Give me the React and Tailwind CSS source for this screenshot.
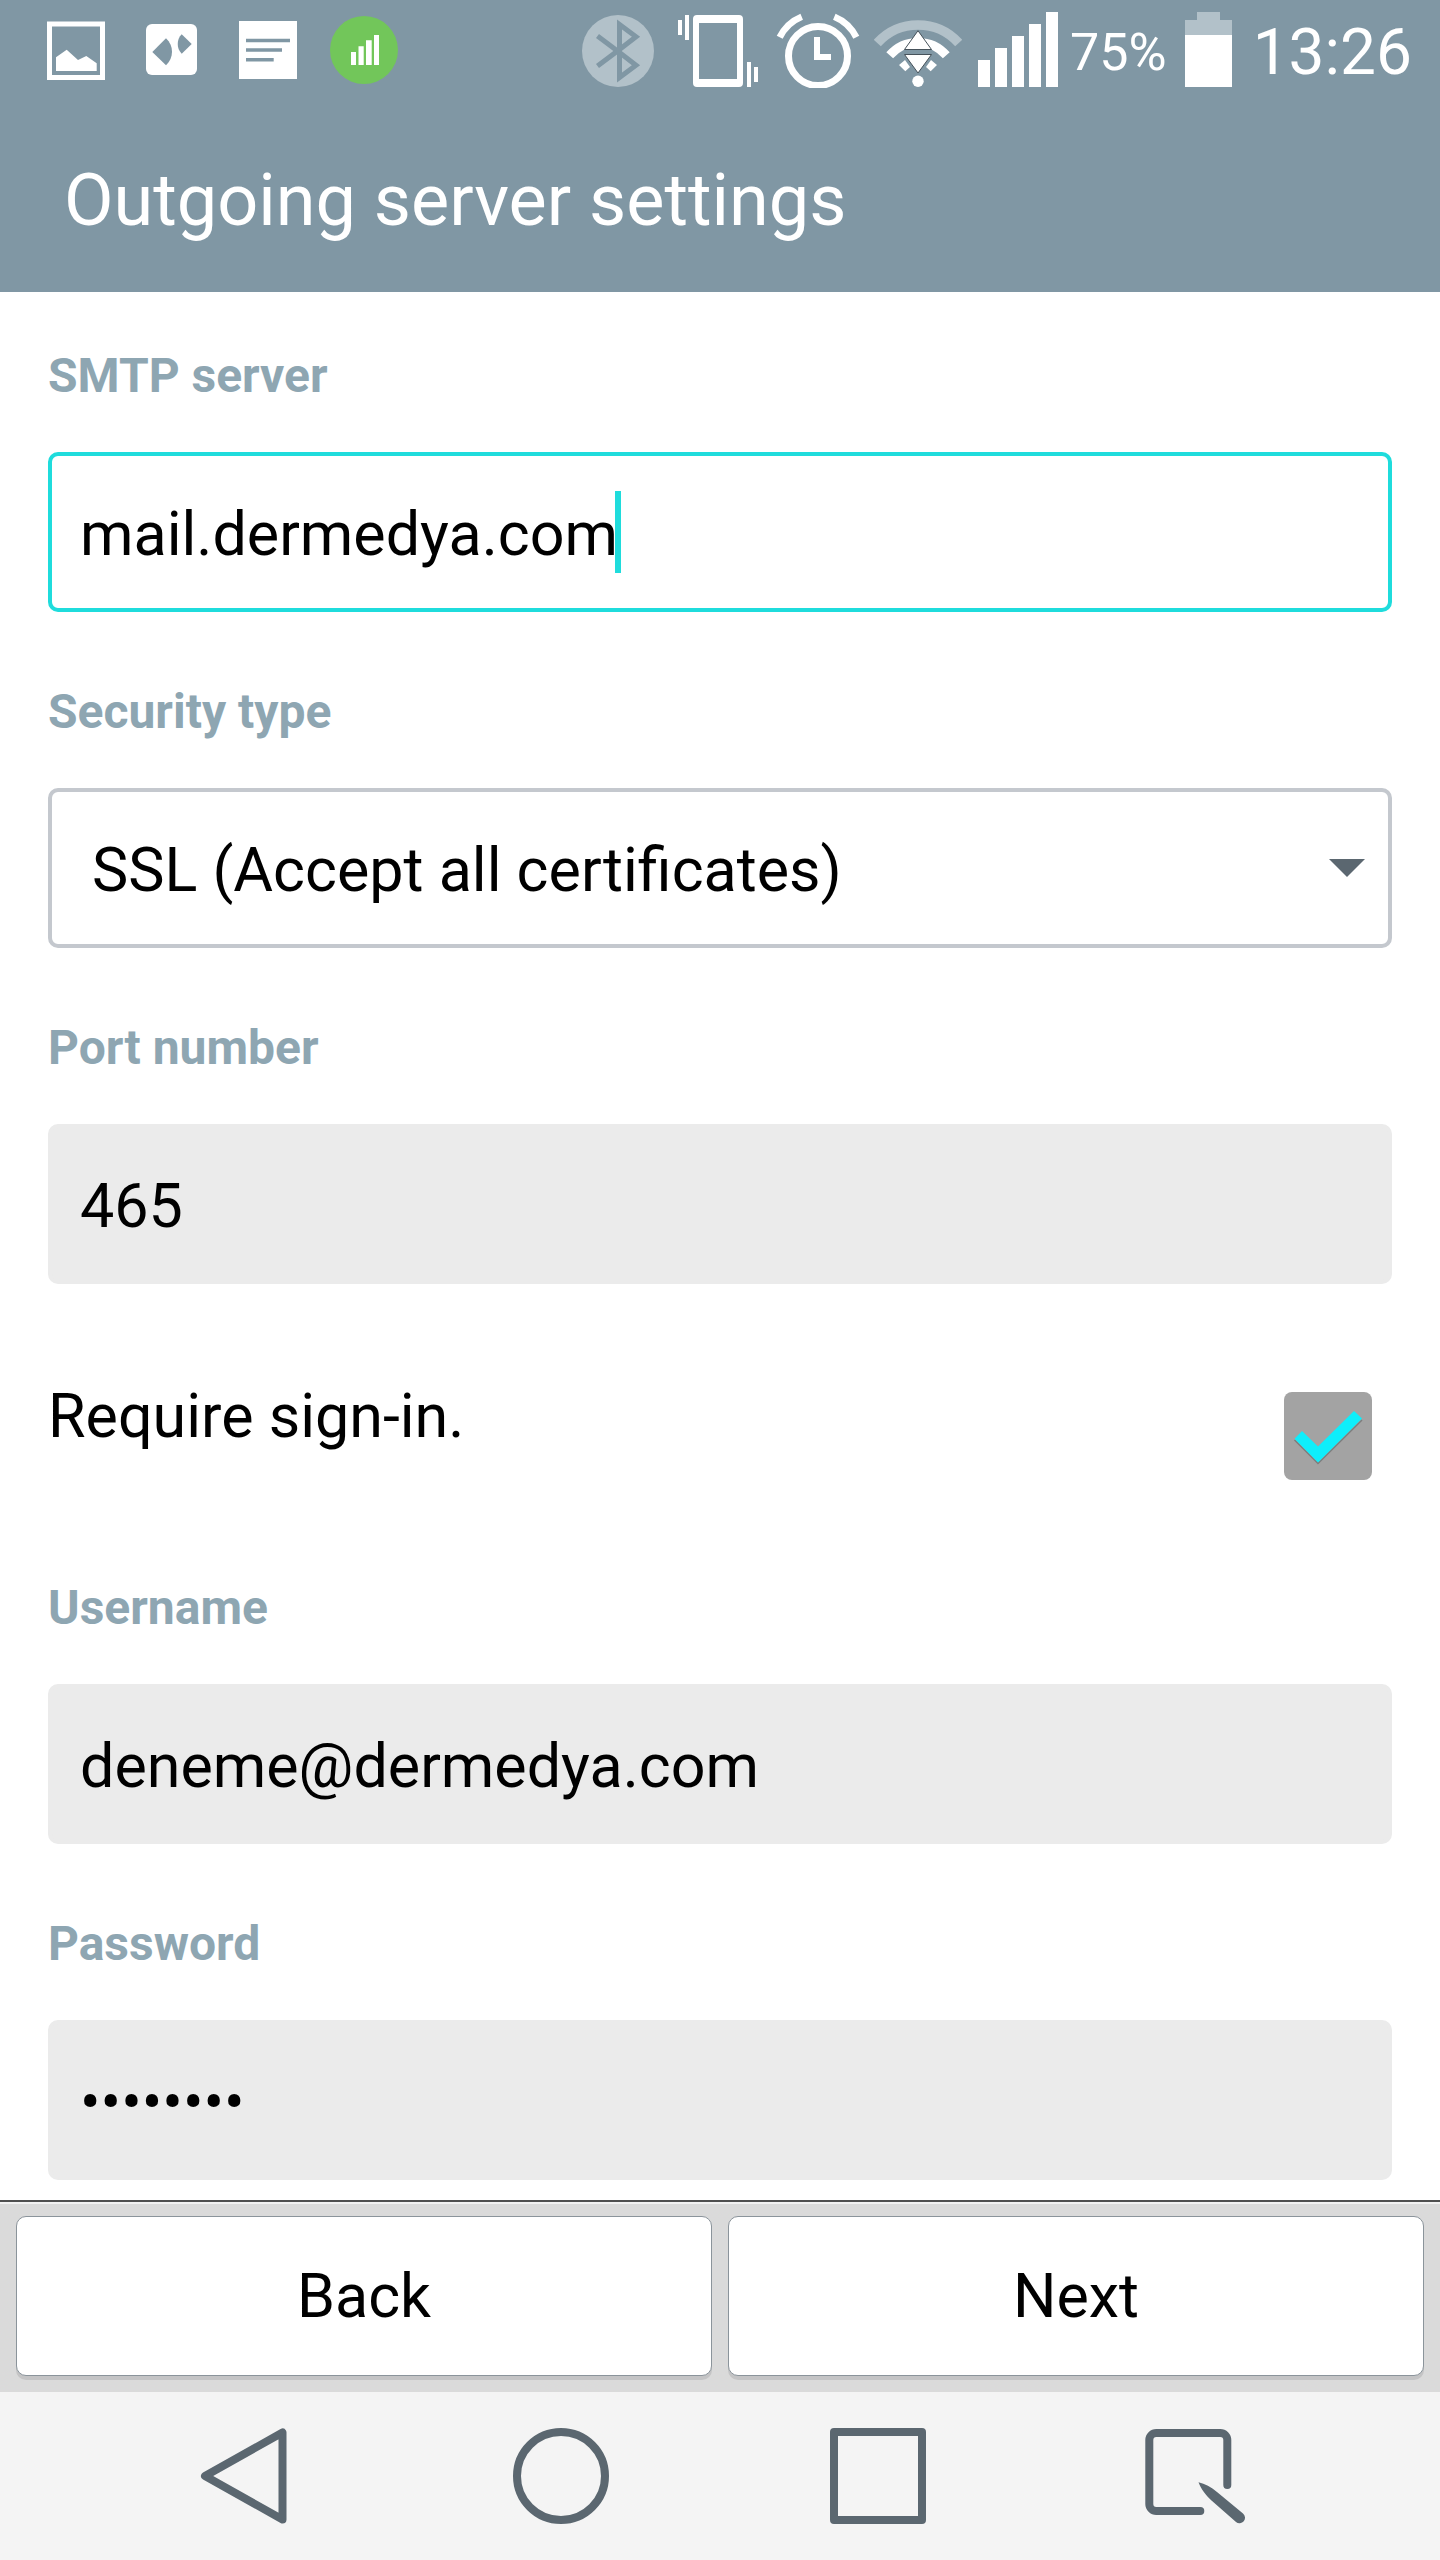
import { useState } from 'react'

const inputBase =
  'block h-[160px] w-full rounded-[10px] border-4 pt-1 pl-7 pr-7 text-[61px] leading-[72px] text-black outline-none'
const inputFilled = `${inputBase} border-[#ebebeb] bg-[#ebebeb]`

function StatusBar() {
  return (
    <div className="flex h-[100px] items-center justify-between pl-[42px] pr-7 text-white">
      <div className="flex items-center gap-7">
        {/* picture */}
        <svg width="68" height="76" viewBox="0 0 68 76">
          <rect x="7.5" y="12" width="53" height="53.5" fill="none" stroke="#fff" strokeWidth="5" />
          <path d="M14 45.3 24.7 37.7 36 48l8.3-4 10.4 7.3V59H14z" fill="#fff" />
        </svg>
        {/* app tile */}
        <svg width="68" height="76" viewBox="0 0 68 76">
          <rect x="8" y="12" width="51" height="51" rx="6" fill="#fff" />
          <path d="M14.3 40 28 26.3c8 7 8 20 0 27z" fill="#8097a4" />
          <path d="M53.7 32 43.7 22.3c-5.3 5-5.3 14.4 0 19.4z" fill="#8097a4" />
        </svg>
        {/* note */}
        <svg width="68" height="76" viewBox="0 0 68 76">
          <rect x="5" y="9" width="58" height="58" fill="#fff" />
          <path d="M12 28.5h44M12 38h36M12 47.7h27.7" stroke="#8097a4" strokeWidth="3.4" />
        </svg>
        {/* signal app */}
        <svg width="68" height="76" viewBox="0 0 68 76">
          <circle cx="34" cy="38" r="34" fill="#72c65a" />
          <path d="M21 40h5v13h-5zM28.5 34.3h5.2V53h-5.2zM36 28.3h5.7V53H36zM44 23h5v30h-5z" fill="#fff" />
        </svg>
      </div>

      <div className="flex items-center">
        <div className="flex items-center gap-3">
          {/* bluetooth */}
          <svg width="88" height="76" viewBox="0 0 88 76">
            <circle cx="44" cy="39" r="36" fill="#b2c1c9" />
            <path
              d="M23.5 24 45.5 40.5 62 53.3 45.5 65.5V12.5L62 24.7 45.5 37.5 23.5 54"
              fill="none"
              stroke="#8097a4"
              strokeWidth="5"
            />
          </svg>
          {/* vibrate */}
          <svg width="88" height="76" viewBox="0 0 88 76" fill="#fff">
            <path
              fillRule="evenodd"
              d="M23 3h42a4 4 0 0 1 4 4v64a4 4 0 0 1-4 4H23a4 4 0 0 1-4-4V7a4 4 0 0 1 4-4zm2 8v56h38V11z"
            />
            <path d="M4 8h4v15H4zM11 3h4v25h-4zM73 50h4v25h-4zM80 55h4v15h-4z" />
          </svg>
          {/* alarm */}
          <svg width="88" height="76" viewBox="0 0 88 76" fill="none" stroke="#fff">
            <circle cx="44" cy="44" r="29.5" strokeWidth="7" />
            <path d="M5.7 25.3A42.6 42.6 0 0 1 27.7 4.7M82.3 25.3A42.6 42.6 0 0 0 60.3 4.7" strokeWidth="6.6" />
            <path d="M43 25v20h14" strokeWidth="6" />
          </svg>
          {/* wifi */}
          <svg width="88" height="76" viewBox="0 0 88 76">
            <path d="M3.3 31a55 55 0 0 1 81.4 0" fill="none" stroke="#b2c1c9" strokeWidth="9.5" />
            <path d="M15.7 43.3a37.6 37.6 0 0 1 56.6 0" fill="none" stroke="#fff" strokeWidth="9" />
            <path d="M25 53l6.3 6.3L36 55l-5-7zM63 53l-6.3 6.3L52 55l5-7z" fill="#fff" />
            <path d="M30 37.5h28v5H30z" fill="#8097a4" />
            <path
              d="M44 18.7 57.5 37.5h-27zM30.5 42.5h27L44 61z"
              fill="#fff"
              stroke="#46525a"
              strokeWidth="1"
            />
            <circle cx="44" cy="69.3" r="5.7" fill="#fff" />
          </svg>
          {/* mobile signal */}
          <svg width="88" height="76" viewBox="0 0 88 76" fill="#fff">
            <path d="M4 48h12v27H4zM21 36h12v39H21zM38 24h12v51H38zM55 12h12v63H55zM72 0h12v75H72z" />
          </svg>
        </div>
        <span className="ml-2 pt-1.5 text-[52px] leading-[60px]">75%</span>
        {/* battery */}
        <svg className="ml-[18px]" width="47" height="76" viewBox="0 0 47 76">
          <path d="M12 0h23v8h12v15H0V8h12z" fill="#b2c1c9" />
          <path d="M0 23h47v52H0z" fill="#fff" />
        </svg>
        <span className="ml-[21px] pt-1.5 text-[64px] leading-[76px]">13:26</span>
      </div>
    </div>
  )
}

function Field({ id, label, children }) {
  return (
    <div>
      <label htmlFor={id} className="mb-12 block text-[48px] leading-[56px] font-bold text-[#8ea6b2]">
        {label}
      </label>
      {children}
    </div>
  )
}

function NavBar() {
  return (
    <nav className="flex h-[168px] items-center justify-between bg-[#f4f4f4] pr-[195px] pl-[194px]">
      <button type="button" aria-label="Back">
        <svg width="100" height="96" viewBox="0 0 100 96" fill="none" stroke="#5b6770" strokeWidth="8" strokeLinejoin="round">
          <path d="M88.5 4.5v87L11 48z" />
        </svg>
      </button>
      <button type="button" aria-label="Home">
        <svg width="100" height="96" viewBox="0 0 100 96" fill="none" stroke="#5b6770" strokeWidth="8">
          <circle cx="50" cy="48" r="44" />
        </svg>
      </button>
      <button type="button" aria-label="Recent apps">
        <svg width="100" height="96" viewBox="0 0 100 96" fill="none" stroke="#5b6770" strokeWidth="8" strokeLinejoin="round">
          <path d="M6 4h88v88H6z" />
        </svg>
      </button>
      <button type="button" aria-label="Quick memo">
        <svg width="100" height="96" viewBox="0 0 100 96">
          <path
            d="M82.3 57V12a7 7 0 0 0-7-7h-64a7 7 0 0 0-7 7v64a7 7 0 0 0 7 7h44"
            fill="none"
            stroke="#5b6770"
            strokeWidth="8"
            strokeLinecap="round"
          />
          <path
            d="M53.5 54.2C60 55.5 66 59 72 64l26 21.5a5.5 5.5 0 0 1-7 8.5L66.5 72.5C61 67.5 56 61 53.5 54.2z"
            fill="#5b6770"
          />
        </svg>
      </button>
    </nav>
  )
}

export default function App() {
  const [server, setServer] = useState('mail.dermedya.com')
  const [security, setSecurity] = useState('ssl-all')
  const [port, setPort] = useState('465')
  const [signIn, setSignIn] = useState(true)
  const [username, setUsername] = useState('deneme@dermedya.com')
  const [password, setPassword] = useState('password')

  return (
    <div className="flex min-h-screen flex-col bg-white font-[Roboto,sans-serif] text-black">
      <header className="bg-[#8097a4]">
        <StatusBar />
        <div className="flex h-[192px] items-center px-16 pt-2.5">
          <h1 className="text-[72px] leading-[84px] text-white">Outgoing server settings</h1>
        </div>
      </header>

      <main className="flex flex-1 flex-col gap-[72px] px-12 pt-14 pb-5">
        <Field id="server" label="SMTP server">
          <div className="relative">
            <input
              id="server"
              type="text"
              value={server}
              onChange={(e) => setServer(e.target.value)}
              className={`${inputBase} border-[#1fdcdc] bg-white caret-transparent`}
            />
            {/* thick text cursor */}
            <span className="absolute top-[39px] left-[567px] h-[82px] w-[6px] bg-[#1fdcdc]" />
          </div>
        </Field>

        <Field id="security" label="Security type">
          <div className="relative">
            <select
              id="security"
              value={security}
              onChange={(e) => setSecurity(e.target.value)}
              className="block h-[160px] w-full appearance-none rounded-[10px] border-4 border-[#c4c8ce] bg-white pt-1 pr-20 pl-10 text-[61px] leading-[72px] text-black outline-none"
            >
              <option value="ssl-all">SSL (Accept all certificates)</option>
            </select>
            <svg className="pointer-events-none absolute top-[71px] right-[27px]" width="36" height="18" viewBox="0 0 36 18">
              <path d="M0 0h36L18 18z" fill="#5b6770" />
            </svg>
          </div>
        </Field>

        <Field id="port" label="Port number">
          <input
            id="port"
            type="text"
            value={port}
            onChange={(e) => setPort(e.target.value)}
            className={inputFilled}
          />
        </Field>

        <div className="flex h-[152px] items-start justify-between pt-6 pr-5">
          <label htmlFor="sign-in" className="text-[61px] leading-[72px]">
            Require sign-in.
          </label>
          <div className="relative mt-3">
            <input
              id="sign-in"
              type="checkbox"
              checked={signIn}
              onChange={(e) => setSignIn(e.target.checked)}
              className="block size-[88px] appearance-none rounded-lg bg-[#a3a3a3]"
            />
            {signIn && (
              <svg className="pointer-events-none absolute inset-0" width="88" height="88" viewBox="0 0 88 88">
                <path d="M10.5 48 34 71.5 78 28" fill="none" stroke="#7d7d7d" strokeWidth="1.5" />
                <path d="M10.5 46.7 18 39l16 15.5L70 19l8 7.500L34 70.5z" fill="#0eeefb" />
              </svg>
            )}
          </div>
        </div>

        <Field id="username" label="Username">
          <input
            id="username"
            type="text"
            value={username}
            onChange={(e) => setUsername(e.target.value)}
            className={inputFilled}
          />
        </Field>

        <Field id="password" label="Password">
          <input
            id="password"
            type="password"
            value={password}
            onChange={(e) => setPassword(e.target.value)}
            className={inputFilled}
          />
        </Field>
      </main>

      <footer className="border-t-2 border-[#4f4f4f]">
        <div className="grid grid-cols-2 gap-4 border-t-2 border-[#f1f1f1] bg-[#dadada] px-4 pt-3 pb-4">
          <button
            type="button"
            className="h-[160px] rounded-[10px] border border-[#8b949b] bg-white text-[61px] leading-[72px] shadow-[0_4px_0_#c4c4c5]"
          >
            Back
          </button>
          <button
            type="button"
            className="h-[160px] rounded-[10px] border border-[#8b949b] bg-white text-[61px] leading-[72px] shadow-[0_4px_0_#c4c4c5]"
          >
            Next
          </button>
        </div>
        <NavBar />
      </footer>
    </div>
  )
}
